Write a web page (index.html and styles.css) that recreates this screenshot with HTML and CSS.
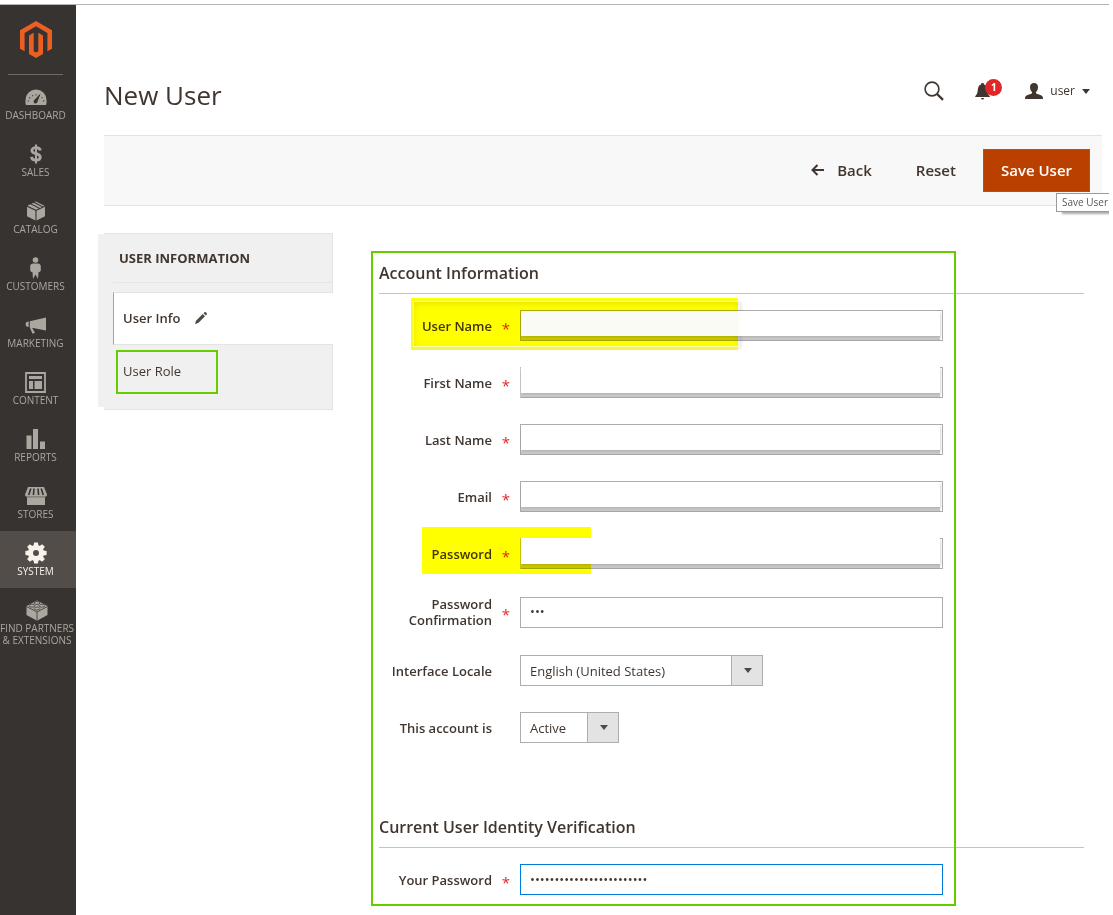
FILE: index.html
```html
<!DOCTYPE html>
<html lang="en">
<head>
<meta charset="utf-8">
<title>New User</title>
<link rel="stylesheet" href="styles.css">
</head>
<body>
<div class="app">
  <aside class="sidebar">
    <a class="logo" href="#" aria-label="Home">
      <svg width="32" height="37" viewBox="0 0 32 37" fill="#eb5f24"><path d="M16 0 32 9.200V27.700L27.400 30.300V11.900L16 5.300 4.600 11.900V30.300L0 27.700V9.200Z"/><path d="M9 14.500 13.700 11.800V30.200L16 31.600 18.300 30.200V11.800L23 14.500V33L16 37 9 33Z"/></svg>
    </a>
    <nav class="menu">
      <a class="menu-item" href="#"><span class="menu-icon"><svg width="22" height="16" viewBox="0 0 22 16"><path fill="currentColor" d="M1 16A11 11 0 0 1 0.500 11a10.500 10.500 0 0 1 21 0 11 11 0 0 1-.5 5Z"/><path d="M3.300 12.500a7.800 7.800 0 0 1 15.400 0" fill="none" stroke="#373330" stroke-width="1.300" stroke-dasharray="1 2.400"/><path d="M15.500 4.500 12.600 12.600a2 2 0 1 1-2.800-2Z" fill="#373330"/></svg></span>Dashboard</a>
      <a class="menu-item" href="#"><span class="menu-icon"><svg width="12" height="20" viewBox="0 0 12 20" fill="none" stroke="currentColor"><path stroke-width="2.800" d="M10.300 6.500C10 4.500 8.300 3.700 6 3.700S1.900 4.700 1.900 6.500C1.900 10.500 10.300 8.700 10.300 13c0 2-1.800 3.100-4.300 3.100S1.700 15 1.500 12.800"/><path stroke-width="2" d="M6 .5v19"/></svg></span>Sales</a>
      <a class="menu-item" href="#"><span class="menu-icon"><svg width="18" height="20" viewBox="0 0 18 20" fill="currentColor"><path d="M0 5.800 8.400 9.800V19.500L0 15.300ZM9.500 9.800 18 5.800V15.300L9.500 19.500Z"/><path d="M.5 4.800 3.300 3.300 11.800 7.500 9 8.800ZM4.600 2.700 6.500 1.700 15 5.900 13 6.900ZM7.600 1.100 9 .4 17.500 4.700 16.100 5.400Z"/></svg></span>Catalog</a>
      <a class="menu-item" href="#"><span class="menu-icon"><svg width="11" height="22" viewBox="0 0 11 22" fill="currentColor"><circle cx="5.500" cy="3" r="2.800"/><path d="M3 6.500h5C10 6.500 10.800 8 10.800 9.500v4.200L9.500 15l-1 .2L8 22 5.500 17.500 3 22 2.500 15.200 1.500 15 .2 13.700V9.500C.2 8 1 6.500 3 6.500Z"/></svg></span>Customers</a>
      <a class="menu-item" href="#"><span class="menu-icon"><svg width="22" height="17" viewBox="0 0 22 17" fill="currentColor"><path d="M21 .5V13.500L8 10.900H7.200L10 15.800 7.500 16.800 4.800 10.500V4.200ZM3.700 4.500V10L1.500 9.500C.3 8.500.3 6 1.500 5Z"/></svg></span>Marketing</a>
      <a class="menu-item" href="#"><span class="menu-icon"><svg width="21" height="21" viewBox="0 0 21 21"><path d="M1 1H20V20H1Z" fill="none" stroke="currentColor" stroke-width="1.800"/><path d="M4 4H17V7H4ZM4 9H8V17H4ZM9.500 9H17V17H9.500Z" fill="currentColor"/></svg></span>Content</a>
      <a class="menu-item" href="#"><span class="menu-icon"><svg width="19" height="20" viewBox="0 0 19 20" fill="currentColor"><path d="M.5 6.500h5V20h-5ZM7 0h5V20H7ZM14 12.500h5V20h-5Z"/></svg></span>Reports</a>
      <a class="menu-item" href="#"><span class="menu-icon"><svg width="22" height="18" viewBox="0 0 22 18"><path fill="currentColor" d="M3 0H19L22 7.500C22 9 21 10 20 10V18H2V10C1 10 0 9 0 7.500Z"/><path d="M5.800 1.500 3.700 8M9 1.500 8.400 8M13 1.500 13.600 8M16.200 1.500 18.300 8" stroke="#373330" stroke-width="1.600"/><path d="M1 9.900H21" stroke="#373330" stroke-width=".5"/></svg></span>Stores</a>
      <a class="menu-item is-active" href="#" aria-current="page"><span class="menu-icon"><svg width="22" height="22" viewBox="-11 -11 22 22"><g fill="currentColor"><circle r="8"/><path id="cog" d="M-2.400-7.500-1.900-10.600H1.900L2.400-7.500V7.500L1.900 10.600H-1.900L-2.400 7.500Z"/><use href="#cog" transform="rotate(45)"/><use href="#cog" transform="rotate(90)"/><use href="#cog" transform="rotate(135)"/></g><circle r="3" fill="#524d49"/></svg></span>System</a>
      <a class="menu-item is-wide" href="#"><span class="menu-icon"><svg width="22" height="21" viewBox="0 0 22 21"><path d="M.5 6 11 .5 21.500 6V15L11 20.700.5 15Z" fill="currentColor"/><path d="M.5 6.500 11 12 21.500 6.500M11 12V20.700" fill="none" stroke="#373330" stroke-width=".8"/><g fill="currentColor" stroke="#373330" stroke-width=".7"><ellipse cx="11" cy="3" rx="2.800" ry="1.500"/><ellipse cx="6" cy="5.700" rx="2.800" ry="1.500"/><ellipse cx="16" cy="5.700" rx="2.800" ry="1.500"/><ellipse cx="11" cy="8.500" rx="2.800" ry="1.500"/></g></svg></span>Find Partners<br>&amp; Extensions</a>
    </nav>
  </aside>

  <main class="page">
    <header class="page-header">
      <h1 class="page-title">New User</h1>
      <div class="header-tools">
        <button class="tool" type="button" aria-label="Search"><svg width="20" height="20" viewBox="0 0 20 20" fill="none" stroke="#41362f"><circle cx="8" cy="8" r="6.900" stroke-width="1.600"/><path d="m13 13 6 5.800" stroke-width="2.400"/></svg></button>
        <button class="tool notices" type="button" aria-label="Notifications"><svg width="15" height="17" viewBox="0 0 15 17" fill="#41362f"><path d="M7.500 0C8.500 0 9 .6 9 1.400 11.500 2.200 12 4.500 12.300 7.500c.2 2.500 1 4 2.500 5.800v.7H.2v-.7C1.700 11.500 2.500 10 2.700 7.500 3 4.500 3.500 2.200 6 1.400 6 .6 6.500 0 7.500 0ZM6 15h3a1.500 1.500 0 0 1-3 0Z"/></svg><span class="badge">1</span></button>
        <button class="tool account" type="button"><svg width="18" height="16" viewBox="0 0 18 16" fill="#41362f"><path d="M9 0c2.800 0 4 1.800 4 4.200C13 6.500 12 8 11 9v1.200c1 .9 5 1.500 6.200 2.800.6.700.8 1.700.8 3H0c0-1.300.2-2.300.8-3C2 11.700 6 11.100 7 10.200V9C6 8 5 6.500 5 4.200 5 1.800 6.200 0 9 0Z"/></svg>user<span class="caret"></span></button>
      </div>
    </header>

    <div class="actions">
      <button class="action" type="button"><svg width="13" height="12" viewBox="0 0 13 12" fill="none" stroke="#41362f" stroke-width="2"><path d="M13 6H1.500M6.500 1 1.500 6 6.500 11"/></svg>Back</button>
      <button class="action" type="button">Reset</button>
      <button class="action primary" type="button">Save User</button>
      <span class="tooltip" role="tooltip">Save User</span>
    </div>

    <div class="columns">
      <nav class="tabs">
        <h2 class="tabs-title">User Information</h2>
        <a class="tab is-active" href="#">User Info <svg width="12" height="12" viewBox="0 0 12 12" fill="#514943"><path d="M0 12 1 8.700 7.700 2 10 4.300 3.300 11ZM8.500 1.200 9.500.3C10.500-.5 12.500 1.500 11.700 2.500L10.800 3.500Z"/></svg></a>
        <a class="tab marked" href="#">User Role</a>
      </nav>

      <form class="form">
        <section class="fieldset">
          <h2 class="legend">Account Information</h2>
          <div class="field"><span class="marker marker-name"></span><label class="label required" for="username">User Name</label><div class="control covered split"><input class="input" id="username" type="text"></div></div>
          <div class="field"><label class="label required" for="firstname">First Name</label><div class="control covered open"><input class="input" id="firstname" type="text"></div></div>
          <div class="field"><label class="label required" for="lastname">Last Name</label><div class="control covered"><input class="input" id="lastname" type="text"></div></div>
          <div class="field"><label class="label required" for="email">Email</label><div class="control covered"><input class="input" id="email" type="email"></div></div>
          <div class="field"><span class="marker marker-password"></span><label class="label required" for="password">Password</label><div class="control covered open"><input class="input" id="password" type="password"></div></div>
          <div class="field is-tall"><label class="label required" for="confirmation">Password Confirmation</label><div class="control"><input class="input" id="confirmation" type="password" value="abc"></div></div>
          <div class="field"><label class="label" for="locale">Interface Locale</label><div class="control"><span class="select-wrap"><select class="select locale" id="locale"><option>English (United States)</option></select></span></div></div>
          <div class="field"><label class="label" for="status">This account is</label><div class="control"><span class="select-wrap"><select class="select status" id="status"><option>Active</option><option>Inactive</option></select></span></div></div>
        </section>
        <section class="fieldset">
          <h2 class="legend">Current User Identity Verification</h2>
          <div class="field"><label class="label required" for="current">Your Password</label><div class="control"><input class="input is-focused" id="current" type="password" value="abcdefghijklmnopqrstuvwx"></div></div>
        </section>
        <span class="frame"></span>
      </form>
    </div>
  </main>
</div>
</body>
</html>
```
FILE: styles.css
```css
*, *::before, *::after { box-sizing: border-box; }

body {
  margin: 0;
  padding: 4px 4px 0 0;
  background: #fff;
  color: #41362f;
  font: 13px/16px "Open Sans", "Noto Sans", sans-serif;
}

button, input, select { font: inherit; color: inherit; }
a { color: inherit; text-decoration: none; }
h1, h2 { margin: 0; }

.app {
  display: flex;
  min-height: calc(100vh - 4px);
  border-top: 1px solid #b5b5b5;
}

/* Sidebar */
.sidebar {
  flex: 0 0 76px;
  min-width: 0;
  background: #373330;
}

.logo {
  display: flex;
  justify-content: center;
  height: 70px;
  margin: 0 13px 0 8px;
  padding-top: 16px;
  border-bottom: 1px solid #736963;
}

.menu-item {
  display: flex;
  flex-direction: column;
  align-items: center;
  min-height: 57px;
  padding: 10px 5px 0 0;
  color: #aaa6a0;
  font-size: 10px;
  line-height: 12px;
  text-align: center;
  text-transform: uppercase;
}

.menu-icon {
  display: flex;
  align-items: center;
  height: 24px;
}

.menu-item.is-active { background: #524d49; color: #f7f3eb; }
.menu-item.is-wide { padding-right: 2px; white-space: nowrap; }

/* Header */
.page {
  flex: 1;
  min-width: 0;
  padding-left: 28px;
  overflow: hidden;
}

.page-header {
  display: flex;
  align-items: center;
  justify-content: space-between;
  height: 130px;
  padding: 42px 19px 0 0;
}

.page-title { font-size: 26px; line-height: 36px; font-weight: 400; padding-top: 8px; }

.header-tools { display: flex; align-items: center; gap: 31px; }

.tool {
  display: flex;
  align-items: center;
  padding: 0;
  border: 0;
  background: none;
  font-size: 12px;
}

.notices { position: relative; }

.badge {
  position: absolute;
  left: 10px;
  top: -4px;
  width: 17px;
  height: 17px;
  border-radius: 50%;
  background: #e22626;
  color: #fff;
  font-size: 10px;
  line-height: 17px;
  font-weight: 700;
}

.account { gap: 7px; padding-left: 4px; }

.caret {
  border: 4px solid transparent;
  border-top: 5px solid #41362f;
  border-bottom: 0;
}

/* Action bar */
.actions {
  position: relative;
  display: flex;
  align-items: center;
  justify-content: flex-end;
  height: 71px;
  margin-right: 7px;
  padding-right: 12px;
  border: solid #e3e3e3;
  border-width: 1px 0;
  background: #f8f8f8;
}

.action {
  display: flex;
  align-items: center;
  gap: 13px;
  height: 43px;
  padding: 0 17px 2px;
  border: 0;
  background: none;
  font-size: 15px;
  font-weight: 600;
}

.action + .action { margin-left: 10px; }

.action.primary {
  border: 1px solid #2a7ab8;
  background: #ba4000;
  color: #fff;
}

.tooltip {
  position: absolute;
  top: 57px;
  right: -13px;
  padding: 0 6px 1px 5px;
  border: 1px solid #999;
  background: #fff;
  box-shadow: 5px 3px 2px -1px #aaa;
  color: #575757;
  font-size: 10px;
  line-height: 16px;
  white-space: nowrap;
}

/* Columns */
.columns {
  display: flex;
  gap: 46px;
  align-items: flex-start;
  padding: 27px 25px 0 0;
}

.tabs {
  position: relative;
  flex: 0 0 229px;
  padding: 0 0 12px 9px;
  border: 1px solid #e3e3e3;
  border-left: 0;
  background: #f0f0f0;
}

.tabs::before {
  content: "";
  position: absolute;
  left: -6px;
  top: 0;
  bottom: 2px;
  width: 6px;
  background: #f0f0f0;
}

.tabs-title {
  height: 49px;
  margin-bottom: 9px;
  padding: 16px 0 0 6px;
  border-bottom: 1px solid #e6e6e6;
  font-size: 13px;
  line-height: 16px;
  font-weight: 700;
  text-transform: uppercase;
}

.tab {
  position: relative;
  display: flex;
  align-items: center;
  gap: 15px;
  height: 52px;
  padding-left: 10px;
}

.tab.is-active {
  height: 53px;
  margin-right: -1px;
  padding: 0 0 2px 9px;
  border: solid #e3e3e3;
  border-width: 1px 0;
  border-left: 1px solid #eb8a6a;
  background: #fff;
  font-weight: 600;
}

.tab.marked::after {
  content: "";
  position: absolute;
  left: 3px;
  top: 5px;
  width: 102px;
  height: 44px;
  border: 2px solid #6c0;
}

/* Form */
.form {
  position: relative;
  flex: 1;
  min-width: 0;
  padding: 28px 0 19px;
}

.frame {
  position: absolute;
  left: -8px;
  top: 18px;
  bottom: 8px;
  width: 83%;
  border: 2px solid #6c0;
  pointer-events: none;
}

.fieldset + .fieldset { padding-top: 72px; }

.legend {
  margin-bottom: 16px;
  padding: 1px 0 9px;
  border-bottom: 1px solid #cac3b4;
  font-size: 16px;
  line-height: 22px;
  font-weight: 600;
}

.field {
  position: relative;
  display: flex;
  align-items: center;
  min-height: 31px;
}

.field.is-tall { min-height: 34px; }
.field + .field { margin-top: 26px; }

.label {
  position: relative;
  flex: 0 0 20%;
  padding: 0 28px 0 0;
  font-weight: 600;
  text-align: right;
}

.label.required::after {
  content: "*";
  position: absolute;
  right: 10px;
  top: 50%;
  margin-top: -6px;
  color: #e22626;
  font-size: 15px;
  font-weight: 400;
}

.control { position: relative; flex: 0 0 60%; }

.input {
  display: block;
  width: 100%;
  height: 31px;
  padding: 0 9px 2px;
  border: 1px solid #adadad;
  border-radius: 0;
  background: #fff;
}

.input.is-focused { border-color: #007bdb; }

.covered::after {
  content: "";
  position: absolute;
  z-index: 2;
  inset: 1px 3px 5px 1px;
  background: #fff;
  box-shadow: 0 4px 1px rgba(0, 0, 0, .22), 1px 1px 2px rgba(0, 0, 0, .12);
  pointer-events: none;
}

.covered.open::after { top: 0; }
.covered.open .input { border-left-color: #ccc; }
.covered.split::after { background: linear-gradient(90deg, #fafbf5 52%, #fff 52%); }

.marker {
  position: absolute;
  z-index: 1;
  background: #ff0;
  mix-blend-mode: multiply;
  pointer-events: none;
}

.marker-name { left: 32px; top: -12px; width: 327px; height: 52px; }

.marker-name::after {
  content: "";
  position: absolute;
  inset: 3px -2px 3px 2px;
  border: 1px solid #ffffb0;
  box-shadow: 1px 1px 3px #ddd, inset 0 2px 6px rgba(0, 0, 0, .1);
}

.marker-password { left: 43px; top: -11px; width: 169px; height: 47px; }

.select-wrap { position: relative; display: inline-block; vertical-align: top; }

.select-wrap::after {
  content: "";
  position: absolute;
  right: 11px;
  top: 13px;
  border: 4px solid transparent;
  border-top: 5px solid #514943;
  border-bottom: 0;
  pointer-events: none;
}

.select {
  display: block;
  height: 31px;
  padding: 0 42px 0 9px;
  border: 1px solid #adadad;
  border-radius: 0;
  appearance: none;
  background: linear-gradient(90deg, #adadad 1px, #e3e3e3 1px) right / 31px 100% no-repeat #fff;
}

.locale { width: 243px; }
.status { width: 99px; }
```
